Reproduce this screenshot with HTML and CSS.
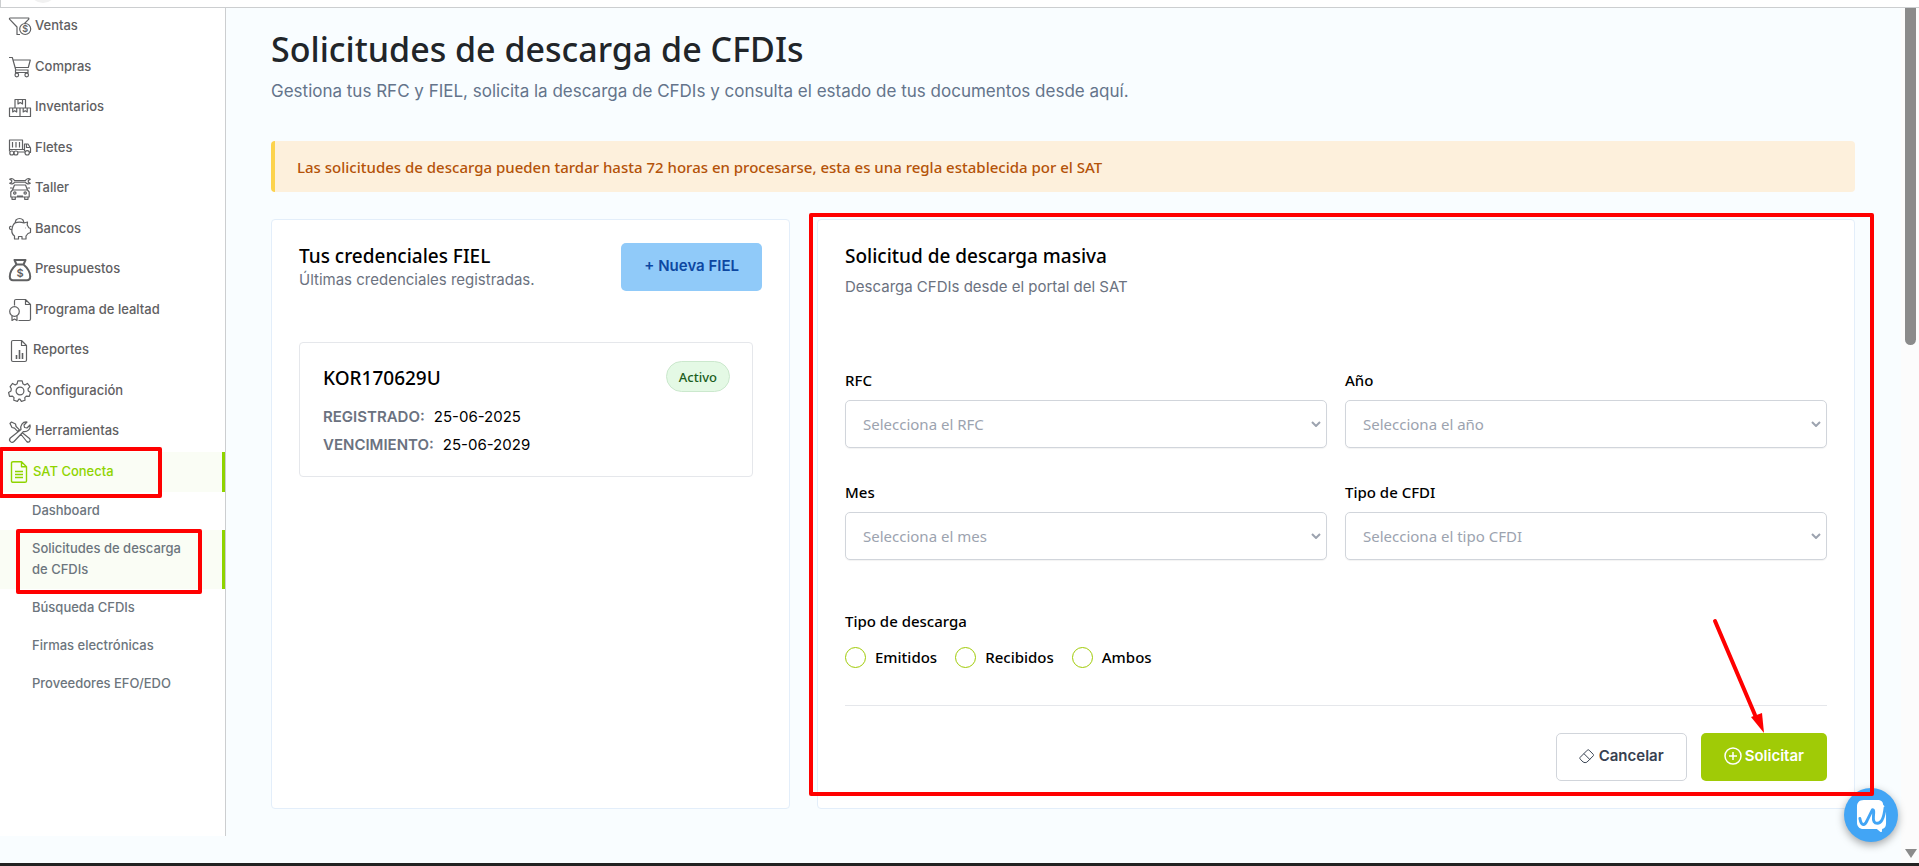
FILE: index.html
```html
<!DOCTYPE html>
<html lang="es">
<head>
<meta charset="utf-8">
<title>Solicitudes de descarga de CFDIs</title>
<link rel="stylesheet" href="styles.css">
</head>
<body>
<div class="app">
  <header class="topbar"><span class="avatar"></span></header>
  <div class="workspace">
    <nav class="sidebar" aria-label="Menú principal">
      <ul class="menu">
        <li><a class="menu-link" href="#"><svg class="icon" viewBox="0 0 22 22"><path d="M.5 2h19.300v1.200L15.500 7.500M.5 2v1.200L8 11v7.500h3"/><circle cx="16.200" cy="13" r="5.500"/><text class="coin small" x="16.200" y="16">$</text></svg>Ventas</a></li>
        <li><a class="menu-link" href="#"><svg class="icon" viewBox="0 0 22 22"><path d="M0 1.500h3.300l3.500 12.500h12.700M4 4h17.300l-2 7.500H6.200M6.500 14v2.500h12.500V14"/><circle cx="7.800" cy="19" r="1.800"/><circle cx="17.700" cy="19" r="1.800"/></svg>Compras</a></li>
        <li><a class="menu-link" href="#"><svg class="icon" viewBox="0 0 22 22"><path d="M6 11V2.500h10.500V11M.5 11h21v8.500H.5zM11 11v8.500M9 2.500v4.500l2.200-1.500L13.500 7V2.500M3.700 11v4l2-1.300 2 1.300v-4M14.200 11v4l2-1.300 2 1.300v-4"/></svg>Inventarios</a></li>
        <li><a class="menu-link" href="#"><svg class="icon" viewBox="0 0 22 22"><path d="M.5 12.500v-9.500h13v9.500zM3.500 5v5.500M7 5v5.500M10.500 5v5.500M9 15h7M15.500 14V7h3.500l2.500 4v4.500h-1M17.500 7v3.500h4M.5 12.500v2M13.500 12.500h2"/><circle cx="2.800" cy="16" r="2"/><circle cx="6.900" cy="16" r="2"/><circle cx="18.200" cy="15.800" r="2.200"/></svg>Fletes</a></li>
        <li><a class="menu-link" href="#"><svg class="icon" viewBox="0 0 22 22"><path d="M5.500 2.500h11c.8-2 3.400-2.300 4.800-1.200l-2 1.200v1.700l2 1c-1.600 1.200-4 .8-4.800-1h-11c-.8 1.800-3.200 2.200-4.800 1l2-1V2.500l-2-1.200C2.100.2 4.700.5 5.500 2.500zM3.500 12l2-5h11l2 5M3.500 12h15l1.700 2v5H1.800v-5zM1 10h2.500M18.500 10H21M3 19v2.300h3.300V19M15.700 19v2.300H19V19M8 18h6"/><circle cx="5.800" cy="15" r="1.200"/><circle cx="16.200" cy="15" r="1.200"/></svg>Taller</a></li>
        <li><a class="menu-link" href="#"><svg class="icon" viewBox="0 0 22 22"><path d="M6 5c2.500-1 6-1 9 0l3.500-1-.3 3 1.600 2.700 1.700.8v4l-2.500 1-2 2.500V21h-4v-2.500H9.500V21h-4v-3C3.500 16.500 2.500 14 3 11.500 1.500 12 .5 11 .5 9.700c0-1.200 1-1.700 2-1.200M3 11.500C3.300 8.500 4.500 6 6 5l1-3c2-2 5.200-2 7 0l1 3M16.500 10h.5"/></svg>Bancos</a></li>
        <li><a class="menu-link" href="#"><svg class="icon bold" viewBox="0 0 22 22"><path d="M5.500 1h11l-2 4.500h-7zM7.500 5.500C4 8.500.8 13 .8 17.500.8 20 2 21.200 4 21.200h14c2 0 3.200-1.200 3.200-3.700 0-4.500-3.200-9-6.700-12M7 5.500h8"/><text class="coin" x="11" y="18">$</text></svg>Presupuestos</a></li>
        <li><a class="menu-link" href="#"><svg class="icon" viewBox="0 0 22 22"><path d="M5.500 6.500V2c0-1 .6-1.500 1.500-1.500h9.500l5 5V20c0 1-.5 1.500-1.500 1.500H9.500M16.500.5v5h5M3 16.500V21.500l2.500-1.500L8 21.500v-5"/><circle cx="5.500" cy="12.500" r="4.800"/></svg>Programa de lealtad</a></li>
        <li><a class="menu-link" href="#"><svg class="icon doc" viewBox="0 0 18 22"><path d="M3 .5h8.500l5 5V20c0 1-.5 1.500-1.500 1.500H3c-1 0-1.500-.5-1.500-1.500V2c0-1 .5-1.500 1.500-1.500zM11.500.5v5h5"/><path class="bars" d="M6.500 19v-4M9.500 19v-9M12.500 19v-6"/></svg>Reportes</a></li>
        <li><a class="menu-link" href="#"><svg class="icon" viewBox="0 0 22 22"><path d="M8.800.8h4.400l.7 3 1.900 1.100 2.600-1.500 2.500 3.200-1.900 2.200.3 2.200 2.200 1.500-1.200 3.800-3-.2-1.500 1.500.2 2.600-3.600 1.200-1.500-2.300H9.900l-1.500 2.300-3.600-1.200.2-2.600-1.500-1.500-3 .2-.9-3.800L2 11l.3-2.200L1.100 6.600l2.500-3.200L6.200 4.900l1.900-1.100z"/><circle cx="11" cy="11" r="3.900"/></svg>Configuración</a></li>
        <li><a class="menu-link" href="#"><svg class="icon" viewBox="0 0 22 22"><path d="M1 2.500L2.500 1l4 2 .6 2.500 3.200 3.200-1.700 1.700L5.500 7.200 3 6.500zM13 11.500l7.500 6c2 2-.8 5-2.800 3l-6-7.500M12 8.500c-1-4 1.500-8 6-7.500l-3 3 .5 2.500 2.500.5 3-3c1 4-3 7.500-6.500 6.500L5 20.500c-2.300 2.300-6-.7-3.700-3.500z"/></svg>Herramientas</a></li>
        <li class="marked"><a class="menu-link active" href="#"><svg class="icon doc" viewBox="0 0 18 22"><path d="M3 .8h8.500l5 5V20c0 .8-.5 1.300-1.500 1.300H3c-1 0-1.500-.5-1.500-1.300V2c0-.8.5-1.200 1.500-1.200zM11.500.8v5h5M5 10.500h8M5 13.500h8M5 16.500h8"/></svg>SAT Conecta</a><span class="mark mark-section"></span></li>
      </ul>
      <ul class="submenu">
        <li><a class="sub-link" href="#">Dashboard</a></li>
        <li class="marked"><a class="sub-link current" href="#">Solicitudes de descarga de CFDIs</a><span class="mark mark-page"></span></li>
        <li><a class="sub-link" href="#">Búsqueda CFDIs</a></li>
        <li><a class="sub-link" href="#">Firmas electrónicas</a></li>
        <li><a class="sub-link" href="#">Proveedores EFO/EDO</a></li>
      </ul>
    </nav>

    <main class="main">
      <h1 class="title">Solicitudes de descarga de CFDIs</h1>
      <p class="lead">Gestiona tus RFC y FIEL, solicita la descarga de CFDIs y consulta el estado de tus documentos desde aquí.</p>
      <p class="alert">Las solicitudes de descarga pueden tardar hasta 72 horas en procesarse, esta es una regla establecida por el SAT</p>

      <div class="cards">
        <section class="card">
          <div class="card-head">
            <div>
              <h2 class="card-title">Tus credenciales FIEL</h2>
              <p class="card-sub">Últimas credenciales registradas.</p>
            </div>
            <button class="btn btn-new" type="button">+ Nueva FIEL</button>
          </div>
          <article class="credential">
            <div class="credential-head">
              <h3 class="credential-name">KOR170629U</h3>
              <span class="badge">Activo</span>
            </div>
            <dl class="dates">
              <div class="date-row"><dt>REGISTRADO:</dt><dd>25-06-2025</dd></div>
              <div class="date-row"><dt>VENCIMIENTO:</dt><dd>25-06-2029</dd></div>
            </dl>
          </article>
        </section>

        <section class="card marked">
          <h2 class="card-title">Solicitud de descarga masiva</h2>
          <p class="card-sub spaced">Descarga CFDIs desde el portal del SAT</p>
          <form class="form">
            <div class="fields">
              <div class="field">
                <label for="rfc">RFC</label>
                <div class="select"><select id="rfc"><option>Selecciona el RFC</option></select><svg class="chevron" viewBox="0 0 10 6"><path d="M1 1l4 4 4-4"/></svg></div>
              </div>
              <div class="field">
                <label for="anio">Año</label>
                <div class="select"><select id="anio"><option>Selecciona el año</option></select><svg class="chevron" viewBox="0 0 10 6"><path d="M1 1l4 4 4-4"/></svg></div>
              </div>
              <div class="field">
                <label for="mes">Mes</label>
                <div class="select"><select id="mes"><option>Selecciona el mes</option></select><svg class="chevron" viewBox="0 0 10 6"><path d="M1 1l4 4 4-4"/></svg></div>
              </div>
              <div class="field">
                <label for="tipo">Tipo de CFDI</label>
                <div class="select"><select id="tipo"><option>Selecciona el tipo CFDI</option></select><svg class="chevron" viewBox="0 0 10 6"><path d="M1 1l4 4 4-4"/></svg></div>
              </div>
            </div>
            <fieldset class="download">
              <legend>Tipo de descarga</legend>
              <div class="radios">
                <label class="radio"><input type="radio" name="descarga">Emitidos</label>
                <label class="radio"><input type="radio" name="descarga">Recibidos</label>
                <label class="radio"><input type="radio" name="descarga">Ambos</label>
              </div>
            </fieldset>
            <div class="actions">
              <button class="btn btn-cancel" type="button"><svg class="eraser" viewBox="0 0 16 16"><path d="M1.300 9.200l7-7c.6-.6 1.200-.6 1.800 0l4 4c.6.6.6 1.200 0 1.800l-6 6c-.8.8-3.200.8-4 0l-2.800-2.800c-.6-.6-.6-1.400 0-2zM5 5.700l5.800 5.800"/></svg>Cancelar</button>
              <button class="btn btn-send" type="button"><svg class="plus" viewBox="0 0 18 18"><circle cx="9" cy="9" r="8"/><path d="M9 5v8M5 9h8"/></svg>Solicitar
                <svg class="arrow" viewBox="0 0 54 118"><path class="shaft" d="M6 6l40 94"/><path class="head" d="M42 102l11-4 2 20z"/></svg>
              </button>
            </div>
          </form>
          <span class="mark mark-form"></span>
        </section>
      </div>
    </main>

    <div class="scrollbar"><span class="thumb"></span><span class="scroll-down"></span></div>
  </div>
  <button class="chat" type="button" aria-label="Abrir chat"><svg class="chat-icon" viewBox="0 0 32 34"><path class="bubble" d="M8 1h14c4 0 6 2 6 5l3 3v16c0 3-1 5-4 6l-.5 4-5-4H8c-5 0-7-3-7-7V8c0-4 2-7 7-7z"/><path class="wave" d="M4 20c1.500 8 5 8 7.500 2L17 11c1.500 0 1.500 2 1 7-.5 5 1 7 4 7 5 0 7-7 8-16"/></svg></button>
</div>
</body>
</html>
```
FILE: styles.css
```css
* { box-sizing: border-box; }
body, h1, h2, h3, p, ul, dl, dd, fieldset { margin: 0; padding: 0; }
body {
  font-family: "Noto Sans", "Open Sans", sans-serif;
  font-size: 15px;
  color: #000;
  background: #f9fdff;
}
ul { list-style: none; }
a { text-decoration: none; }
button, select, input { font: inherit; margin: 0; }

.app {
  position: relative;
  display: flex;
  flex-direction: column;
  min-height: 100vh;
  overflow: hidden;
  border-bottom: 3px solid #222;
}
.topbar {
  height: 8px;
  padding-left: 28px;
  overflow: hidden;
  background: #fff;
  border-bottom: 1px solid #ccced0;
  border-left: 1px solid #ccced0;
}
.avatar {
  display: block;
  width: 28px;
  height: 28px;
  margin-top: -25px;
  border-radius: 50%;
  background: #f1f1f1;
}
.workspace { flex: 1; display: flex; }

/* Sidebar */
.sidebar {
  flex: 0 0 226px;
  margin-bottom: 27px;
  background: #fff;
  border-right: 1px solid #ccced0;
  font-family: Inter, sans-serif;
  font-size: 13px;
  font-weight: 500;
}
.menu { margin-top: -2px; }
.menu-link {
  display: flex;
  align-items: center;
  gap: 4px;
  height: 40px;
  padding: 0 0 3px 9px;
  color: #5f6062;
}
.menu li:nth-child(odd) .menu-link { height: 41px; }
.icon {
  width: 22px;
  height: 22px;
  margin-top: 3px;
  overflow: visible;
  fill: none;
  stroke: #5f6062;
  stroke-width: 1.2;
  stroke-linejoin: round;
}
.icon.doc { width: 20px; }
.icon.bold { stroke-width: 2; }
.bars { stroke-width: 1.6; }
.coin {
  fill: #5f6062;
  stroke: none;
  font-size: 11px;
  font-weight: 600;
  text-anchor: middle;
}
.coin.small { font-size: 9px; }
.active {
  color: #8fd400;
  background: #fafdf5;
  border-right: 3px solid #8fd400;
}
.active .icon { stroke: #8fd400; stroke-width: 1.4; }
.sub-link {
  display: block;
  padding: 8px 32px 9px;
  line-height: 21px;
  color: #6c757d;
}
.current {
  background: #fafdf5;
  border-right: 3px solid #8fd400;
}

/* Red annotations */
.marked { position: relative; }
.mark {
  position: absolute;
  z-index: 5;
  border: 4px solid #f00;
  border-radius: 2px;
  pointer-events: none;
}
.mark-section { inset: -5px 63px -6px -1px; }
.mark-page { inset: -1px 23px -5px 16px; }
.mark-form { inset: -7px -20px 12px -9px; }

/* Main column */
.main { flex: 1; padding: 19px 46px 27px 45px; }
.title {
  font-size: 34px;
  font-weight: 500;
  line-height: 44px;
  color: #212529;
}
.lead {
  margin-top: 7px;
  font-family: Inter, sans-serif;
  font-size: 17px;
  line-height: 26px;
  color: #64748b;
}
.alert {
  margin: 37px 0 27px;
  padding: 14px 22px 12px;
  border-left: 4px solid #fcd34d;
  border-radius: 4px;
  background: #fdf0dc;
  line-height: 25px;
  font-weight: 500;
  color: #b45309;
}
.cards { display: grid; grid-template-columns: 1fr 2fr; gap: 27px; }
.card {
  padding: 23px 27px 27px;
  background: #fff;
  border: 1px solid #e3eefa;
  border-radius: 4px;
}
.card-head { display: flex; justify-content: space-between; }
.card-title { font-size: 19px; font-weight: 500; line-height: 26px; }
.card-sub {
  font-family: Inter, sans-serif;
  font-size: 15px;
  line-height: 22px;
  color: #6b7280;
}
.spaced { margin-top: 7px; }
.btn {
  display: flex;
  align-items: center;
  height: 48px;
  padding: 0 22px 3px;
  border: 1px solid transparent;
  border-radius: 5px;
  font-family: Inter, sans-serif;
  font-weight: 600;
}
.btn-new { background: #90caf9; color: #0d47a1; }

.credential {
  margin: 51px 9px 0 0;
  padding: 18px 22px 17px 23px;
  border: 1px solid #e5e7eb;
  border-radius: 4px;
}
.credential-head { display: flex; justify-content: space-between; }
.credential-name { font-size: 19px; font-weight: 500; line-height: 35px; }
.badge {
  height: 31px;
  padding: 0 12px;
  border: 1px solid #cbe8cd;
  border-radius: 16px;
  background: #e4f9e5;
  font-size: 13px;
  font-weight: 500;
  line-height: 31px;
  color: #1b5e20;
}
.dates {
  margin-top: 7px;
  font-family: Inter, sans-serif;
  line-height: 28px;
}
.date-row { display: flex; gap: 9px; }
.date-row dt { font-weight: 600; color: #6b7280; }

/* Form */
.form { margin-top: 70px; }
.fields { display: grid; grid-template-columns: 1fr 1fr; gap: 32px 18px; }
.field { display: grid; gap: 8px; }
.field label, .download legend, .radio { font-weight: 500; line-height: 24px; }
.select { display: grid; align-items: center; }
.select select, .chevron { grid-area: 1 / 1; }
.select select {
  appearance: none;
  width: 100%;
  height: 48px;
  padding: 0 32px 0 17px;
  border: 1px solid #d1d5db;
  border-radius: 5px;
  background: #fff;
  color: #9ca3af;
  box-shadow: 0 1px 1px rgba(0, 0, 0, 0.05);
}
.chevron {
  justify-self: end;
  width: 10px;
  height: 6px;
  margin-right: 6px;
  fill: none;
  stroke: #9ca3af;
  stroke-width: 2;
  pointer-events: none;
}
.download { margin-top: 49px; border: 0; }
.download legend { padding: 0; }
.radios { display: flex; gap: 18px; padding-top: 12px; }
.radio { display: flex; align-items: center; gap: 9px; }
.radio input {
  appearance: none;
  width: 21px;
  height: 21px;
  border: 1px solid #a0cb06;
  border-radius: 50%;
  background: #fff;
}
.actions {
  display: flex;
  justify-content: flex-end;
  gap: 14px;
  margin-top: 36px;
  padding-top: 27px;
  border-top: 1px solid #e5e7eb;
}
.btn-cancel { gap: 4px; border-color: #d1d5db; background: #fff; color: #374151; }
.btn-send { position: relative; gap: 3px; background: #a0cb06; color: #fff; }
.eraser { width: 16px; height: 16px; fill: none; stroke: #374151; }
.plus { width: 18px; height: 18px; fill: none; stroke: #fff; stroke-width: 1.5; }
.arrow {
  position: absolute;
  right: 63px;
  bottom: 47px;
  width: 54px;
  height: 118px;
  overflow: visible;
  pointer-events: none;
}
.shaft { fill: none; stroke: #f00; stroke-width: 4; stroke-linecap: round; }
.head { fill: #f00; }

/* Scrollbar and chat launcher */
.scrollbar {
  flex: 0 0 18px;
  display: flex;
  flex-direction: column;
  justify-content: space-between;
  align-items: center;
  padding: 0 2px 5px 3px;
  background: #fcfcfc;
}
.thumb { width: 11px; height: 337px; border-radius: 0 0 6px 6px; background: #8b8b8b; }
.scroll-down {
  border: 6px solid transparent;
  border-top: 9px solid #8b8b8b;
  border-bottom: 0;
}
.chat {
  position: absolute;
  right: 21px;
  bottom: 21px;
  display: grid;
  place-items: center;
  width: 54px;
  height: 54px;
  padding: 0;
  border: 0;
  border-radius: 50%;
  background: #42a5f5;
  box-shadow: 0 3px 8px rgba(0, 0, 0, 0.35);
}
.chat-icon { width: 31px; height: 33px; }
.bubble { fill: #fff; }
.wave { fill: none; stroke: #42a5f5; stroke-width: 3; stroke-linecap: round; stroke-linejoin: round; }
```
